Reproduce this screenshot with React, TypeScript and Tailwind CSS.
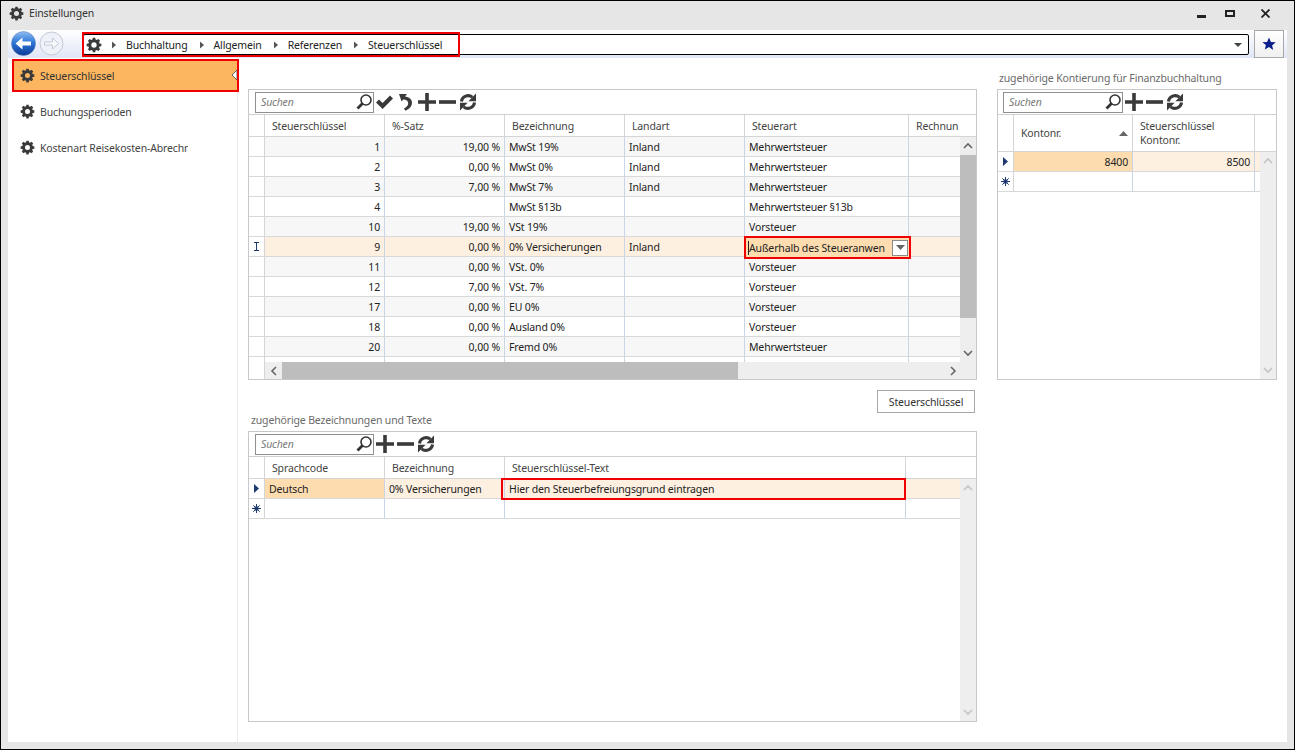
import React from "react";

const GEAR = "M10.2 1h3.6l.5 2.7c.7.2 1.3.5 1.9.8l2.3-1.6 2.6 2.6-1.6 2.3c.3.6.6 1.2.8 1.9l2.7.5v3.6l-2.7.5c-.2.7-.5 1.3-.8 1.9l1.6 2.3-2.6 2.6-2.3-1.6c-.6.3-1.2.6-1.9.8l-.5 2.7h-3.6l-.5-2.7c-.7-.2-1.3-.5-1.9-.8l-2.3 1.6-2.6-2.6 1.6-2.3c-.3-.6-.6-1.2-.8-1.9L1 13.8v-3.6l2.7-.5c.2-.7.5-1.3.8-1.9L2.9 5.5l2.6-2.6 2.3 1.6c.6-.3 1.2-.6 1.9-.8zM12 8a4 4 0 100 8 4 4 0 000-8z";

function Gear({ size = 15 }: { size?: number }) {
  return (
    <svg width={size} height={size} viewBox="0 0 24 24" className="shrink-0">
      <path d={GEAR} fill="#3a3a3a" fillRule="evenodd" />
    </svg>
  );
}

function Tri({ color = "#555", w = 5, h = 9 }: { color?: string; w?: number; h?: number }) {
  return (
    <svg width={w} height={h} viewBox="0 0 5 9" className="shrink-0">
      <path d="M0 0l5 4.5L0 9z" fill={color} />
    </svg>
  );
}

function SearchBox({ width }: { width: number }) {
  return (
    <div
      className="flex h-[21px] items-center justify-between border border-[#8f8f8f] bg-white pl-[5px] pr-0 text-[#7a7a7a] italic"
      style={{ width }}
    >
      <span>Suchen</span>
      <svg width="18" height="18" viewBox="0 0 18 18">
        <circle cx="11" cy="7" r="5" fill="none" stroke="#333" strokeWidth="1.6" />
        <path d="M7.5 10.5L2.5 15.5" stroke="#333" strokeWidth="2.8" />
      </svg>
    </div>
  );
}

function Check() {
  return (
    <svg width="19" height="16" viewBox="0 0 19 16">
      <path d="M1 8.5l3-3 3.6 3.6L15 1.5l3 3L7.6 15z" fill="#3a3a3a" />
    </svg>
  );
}
function Undo() {
  return (
    <svg width="17" height="20" viewBox="0 0 17 20" className="ml-[3px]">
      <path d="M1 2h8l-2 2.4c4 .4 7 2.6 7 6.4 0 3.6-2.8 6.2-6.6 8L6 16.6c2.4-1.4 4.2-3 4.2-5.4 0-2.2-1.8-3.4-5-3.6L3.6 9.6z" fill="#3a3a3a" />
    </svg>
  );
}
function Plus({ className = "" }: { className?: string }) {
  return (
    <svg width="20" height="20" viewBox="0 0 20 20" className={className}>
      <path d="M8.2 1h3.6v7.2H19v3.6h-7.2V19H8.2v-7.2H1V8.2h7.2z" fill="#3a3a3a" />
    </svg>
  );
}
function Minus() {
  return (
    <svg width="19" height="20" viewBox="0 0 19 20">
      <rect x="1" y="8.2" width="17" height="3.6" fill="#3a3a3a" />
    </svg>
  );
}
function Sync() {
  return (
    <svg width="20" height="20" viewBox="0 0 20 20">
      <path d="M3.4 9.5A6.8 6.8 0 0 1 14.4 5.2" fill="none" stroke="#3a3a3a" strokeWidth="3" />
      <path d="M16.6 10.5A6.8 6.8 0 0 1 5.6 14.8" fill="none" stroke="#3a3a3a" strokeWidth="3" />
      <path d="M18 1.6v7.6h-7.6z" fill="#3a3a3a" />
      <path d="M2 18.4v-7.6h7.6z" fill="#3a3a3a" />
    </svg>
  );
}

function Star() {
  return (
    <svg width="14" height="14" viewBox="0 0 14 14">
      <path d="M7 .5l1.9 4.4 4.8.4-3.6 3.1 1.1 4.7L7 10.1l-4.2 2.5 1.1-4.7L.3 5.3l4.8-.4z" fill="#0b1f8c" />
    </svg>
  );
}

function NewRowMark() {
  return (
    <svg width="9" height="9" viewBox="0 0 9 9">
      <path d="M4.5 0v9M0 4.5h9M1.3 1.3l6.4 6.4M7.7 1.3L1.3 7.7" stroke="#1f3a6e" strokeWidth="1" />
      <circle cx="4.5" cy="4.5" r="2.2" fill="#1f3a6e" />
    </svg>
  );
}

function IBeam() {
  return (
    <svg width="5" height="9" viewBox="0 0 5 9">
      <path d="M0 .5h5M0 8.5h5M2.5 .5v8" stroke="#1f3a6e" strokeWidth="1" fill="none" />
    </svg>
  );
}

function Chevron({ dir, color = "#666" }: { dir: "up" | "down" | "left" | "right"; color?: string }) {
  const d = {
    up: "M1 6l4-4 4 4",
    down: "M1 2l4 4 4-4",
    left: "M6 1L2 5l4 4",
    right: "M2 1l4 4-4 4",
  }[dir];
  const box = dir === "up" || dir === "down" ? "0 0 10 8" : "0 0 8 10";
  const w = dir === "up" || dir === "down" ? 10 : 8;
  const h = dir === "up" || dir === "down" ? 8 : 10;
  return (
    <svg width={w} height={h} viewBox={box}>
      <path d={d} fill="none" stroke={color} strokeWidth="1.6" />
    </svg>
  );
}

function HeaderCell({ w, children, noBorder }: { w: number; children?: React.ReactNode; noBorder?: boolean }) {
  return (
    <div
      className={`flex h-full shrink-0 items-center overflow-hidden whitespace-nowrap pl-[7px] text-[#444] ${noBorder ? "" : "border-r border-[#d5d5d5]"}`}
      style={{ width: w }}
    >
      {children}
    </div>
  );
}

type Cell = { t?: string; right?: boolean };

function Row({
  widths,
  cells,
  mark,
  zebra,
  selected,
  firstStrong,
  height = 20,
}: {
  widths: number[];
  cells: Cell[];
  mark?: React.ReactNode;
  zebra?: boolean;
  selected?: boolean;
  firstStrong?: boolean;
  height?: number;
}) {
  return (
    <div
      className={`flex shrink-0 border-b border-[#d8d8d8] ${selected ? "bg-[#fdf0e0]" : zebra ? "bg-[#f7f7f7]" : "bg-white"}`}
      style={{ height }}
    >
      <div className="flex w-[16px] shrink-0 items-center justify-center border-r border-[#d5d5d5] bg-white">{mark}</div>
      {cells.map((c, i) => (
        <div
          key={i}
          className={`flex shrink-0 items-center overflow-hidden whitespace-nowrap text-[#222] ${c.right ? "justify-end pr-[4px]" : "pl-[4px]"} ${
            i < cells.length - 1 ? "border-r border-[#c9d5e6]" : ""
          } ${selected && firstStrong && i === 0 ? "bg-[#fddcb0]" : ""}`}
          style={{ width: widths[i] }}
        >
          {c.t}
        </div>
      ))}
    </div>
  );
}

function VScroll({ thumb, disabled }: { thumb?: [number, number]; disabled?: boolean }) {
  const c = disabled ? "#c4c4c4" : "#666";
  return (
    <div className="relative flex w-[16px] shrink-0 flex-col justify-between bg-[#eeeeee]">
      <div className="flex h-[18px] items-center justify-center">
        <Chevron dir="up" color={c} />
      </div>
      <div className="flex h-[18px] items-center justify-center">
        <Chevron dir="down" color={c} />
      </div>
      {thumb && (
        <div className="absolute left-0 right-0 bg-[#bdbdbd]" style={{ top: thumb[0], height: thumb[1] }} />
      )}
    </div>
  );
}

const WM = [120, 120, 120, 120, 164, 51];
const rowsMain: string[][] = [
  ["1", "19,00 %", "MwSt 19%", "Inland", "Mehrwertsteuer"],
  ["2", "0,00 %", "MwSt 0%", "Inland", "Mehrwertsteuer"],
  ["3", "7,00 %", "MwSt 7%", "Inland", "Mehrwertsteuer"],
  ["4", "", "MwSt §13b", "", "Mehrwertsteuer §13b"],
  ["10", "19,00 %", "VSt 19%", "", "Vorsteuer"],
  ["9", "0,00 %", "0% Versicherungen", "Inland", ""],
  ["11", "0,00 %", "VSt. 0%", "", "Vorsteuer"],
  ["12", "7,00 %", "VSt. 7%", "", "Vorsteuer"],
  ["17", "0,00 %", "EU 0%", "", "Vorsteuer"],
  ["18", "0,00 %", "Ausland 0%", "", "Vorsteuer"],
  ["20", "0,00 %", "Fremd 0%", "", "Mehrwertsteuer"],
];

function toCells(r: string[]): Cell[] {
  return [
    { t: r[0], right: true },
    { t: r[1], right: true },
    { t: r[2] },
    { t: r[3] },
    { t: r[4] },
    {},
  ];
}

function Toolbar({ width, check, small }: { width: number; check?: boolean; small?: boolean }) {
  return (
    <div className={`flex h-[25px] shrink-0 items-center gap-[1px] border-b border-[#d0d0d0] ${small ? "pl-[5px]" : "pl-[6px]"}`}>
      <SearchBox width={width} />
      {check && <Check />}
      {check && <Undo />}
      <Plus className={check ? "ml-[1px]" : ""} />
      <Minus />
      <Sync />
    </div>
  );
}

function MainGrid() {
  return (
    <div className="flex h-[291px] shrink-0 flex-col border border-[#c8c8c8]">
      <Toolbar width={119} check />
      <div className="flex h-[22px] shrink-0 border-b border-[#d5d5d5]">
        <HeaderCell w={16} />
        <HeaderCell w={120}>Steuerschlüssel</HeaderCell>
        <HeaderCell w={120}>%-Satz</HeaderCell>
        <HeaderCell w={120}>Bezeichnung</HeaderCell>
        <HeaderCell w={120}>Landart</HeaderCell>
        <HeaderCell w={164}>Steuerart</HeaderCell>
        <HeaderCell w={51} noBorder>
          Rechnun
        </HeaderCell>
      </div>
      <div className="flex min-h-0 flex-1">
        <div className="flex min-w-0 flex-1 flex-col overflow-hidden">
          {rowsMain.map((r, i) => {
            const selected = i === 5;
            return (
              <div key={i} className={`shrink-0 ${selected ? "relative z-10" : ""}`}>
                <Row
                  widths={WM}
                  cells={toCells(r)}
                  zebra={i % 2 === 0}
                  selected={selected}
                  mark={selected ? <IBeam /> : undefined}
                />
                {selected && (
                  <div className="absolute left-[495px] top-[-1px] flex h-[23px] w-[167px] items-center justify-between border-2 border-[#f00000] bg-[#fddcb0] pl-[2px] pr-[1px]">
                    <span className="whitespace-nowrap border-l border-[#222] text-[#222]">Außerhalb des Steueranwen</span>
                    <span className="flex h-[16px] w-[16px] items-center justify-center border border-[#8a8a8a] bg-white">
                      <svg width="9" height="5" viewBox="0 0 9 5">
                        <path d="M0 0h9L4.5 5z" fill="#666" />
                      </svg>
                    </span>
                  </div>
                )}
              </div>
            );
          })}
          <div className="flex h-[5px] shrink-0">
            <div className="w-[16px] shrink-0 border-r border-[#d5d5d5]" />
            <div className="w-[120px] shrink-0 border-r border-[#c9d5e6]" />
            <div className="w-[120px] shrink-0 border-r border-[#c9d5e6]" />
            <div className="w-[120px] shrink-0 border-r border-[#c9d5e6]" />
            <div className="w-[120px] shrink-0 border-r border-[#c9d5e6]" />
            <div className="w-[164px] shrink-0 border-r border-[#c9d5e6]" />
          </div>
        </div>
        <VScroll thumb={[18, 163]} />
      </div>
      <div className="flex h-[17px] shrink-0">
        <div className="w-[16px] shrink-0 border-r border-[#d5d5d5]" />
        <div className="flex flex-1 items-center bg-[#eeeeee]">
          <div className="flex w-[17px] shrink-0 items-center justify-center">
            <Chevron dir="left" />
          </div>
          <div className="h-full w-[456px] bg-[#bdbdbd]" />
          <div className="flex-1" />
          <div className="flex w-[14px] shrink-0 items-center justify-center">
            <Chevron dir="right" />
          </div>
        </div>
        <div className="w-[16px] shrink-0 bg-[#eeeeee]" />
      </div>
    </div>
  );
}

function TextGrid() {
  const W = [120, 120, 401, 54];
  return (
    <div className="flex h-[291px] shrink-0 flex-col border border-[#c8c8c8]">
      <Toolbar width={119} />
      <div className="flex h-[22px] shrink-0 border-b border-[#d5d5d5]">
        <HeaderCell w={16} />
        <HeaderCell w={120}>Sprachcode</HeaderCell>
        <HeaderCell w={120}>Bezeichnung</HeaderCell>
        <HeaderCell w={401}>Steuerschlüssel-Text</HeaderCell>
      </div>
      <div className="flex min-h-0 flex-1">
        <div className="min-w-0 flex-1">
          <div className="relative">
            <Row
              widths={W}
              selected
              firstStrong
              mark={<Tri color="#1f3a6e" />}
              cells={[{ t: "Deutsch" }, { t: "0% Versicherungen" }, { t: "" }, {}]}
            />
            <div className="absolute left-[252px] top-[-1px] flex h-[22px] w-[405px] items-center border-2 border-[#f00000] pl-[6px] text-[#222]">
              Hier den Steuerbefreiungsgrund eintragen
            </div>
          </div>
          <Row widths={W} mark={<NewRowMark />} cells={[{}, {}, {}, {}]} />
        </div>
        <VScroll disabled />
      </div>
    </div>
  );
}

function AccountGrid() {
  const W = [119, 122, 5];
  return (
    <div className="flex h-[291px] shrink-0 flex-col border border-[#c8c8c8]">
      <Toolbar width={120} small />
      <div className="flex h-[37px] shrink-0 border-b border-[#d5d5d5]">
        <HeaderCell w={16} />
        <div className="flex h-full w-[119px] shrink-0 items-center justify-between border-r border-[#d5d5d5] pl-[7px] pr-[4px] text-[#444]">
          <span>Kontonr.</span>
          <svg width="9" height="5" viewBox="0 0 9 5">
            <path d="M0 5h9L4.5 0z" fill="#666" />
          </svg>
        </div>
        <div className="flex h-full w-[122px] shrink-0 items-center border-r border-[#d5d5d5] pl-[7px] leading-[14px] text-[#444]">
          <span>
            Steuerschlüssel
            <br />
            Kontonr.
          </span>
        </div>
      </div>
      <div className="flex min-h-0 flex-1">
        <div className="min-w-0 flex-1">
          <Row
            widths={W}
            selected
            firstStrong
            mark={<Tri color="#1f3a6e" />}
            cells={[{ t: "8400", right: true }, { t: "8500", right: true }, {}]}
          />
          <Row widths={W} mark={<NewRowMark />} cells={[{}, {}, {}]} />
        </div>
        <VScroll disabled />
      </div>
    </div>
  );
}

function SideItem({ label, active }: { label: string; active?: boolean }) {
  return (
    <div
      className={`relative flex h-[33px] w-[227px] items-center gap-[5px] overflow-hidden pl-[6px] ${
        active ? "border-2 border-[#f00000] bg-[#fcb65f] text-[#333]" : "border-2 border-transparent text-[#444]"
      }`}
    >
      <Gear size={15} />
      <span className="w-[148px] overflow-hidden whitespace-nowrap">{label}</span>
      {active && (
        <svg width="6" height="10" viewBox="0 0 6 10" className="absolute right-0 top-[9px]">
          <path d="M6 0L1 5l5 5z" fill="#fff" stroke="#444" strokeWidth="0.8" />
        </svg>
      )}
    </div>
  );
}

function NavCircle({ disabled }: { disabled?: boolean }) {
  return disabled ? (
    <svg width="25" height="25" viewBox="0 0 25 25">
      <circle cx="12.5" cy="12.5" r="11.5" fill="#eef1f7" stroke="#c3c9d6" />
      <path d="M5.5 11h8V7l6 5.5-6 5.5v-4h-8z" fill="#f8f9fb" stroke="#c3c9d6" />
    </svg>
  ) : (
    <svg width="25" height="25" viewBox="0 0 25 25">
      <defs>
        <linearGradient id="bk" x1="0" y1="0" x2="0" y2="1">
          <stop offset="0" stopColor="#8fbdf2" />
          <stop offset="0.45" stopColor="#2f78d8" />
          <stop offset="1" stopColor="#0b3a96" />
        </linearGradient>
      </defs>
      <circle cx="12.5" cy="12.5" r="12" fill="url(#bk)" stroke="#5d7fb8" strokeWidth="0.5" />
      <path d="M20 10.5h-8.5V6.5L4.5 12.5l7 6v-4H20z" fill="#fff" />
    </svg>
  );
}

function Crumb({ label, first }: { label: string; first?: boolean }) {
  return (
    <>
      <span className={first ? "ml-[10px]" : "ml-[12px]"}>
        <Tri w={4} h={8} />
      </span>
      <span className="ml-[10px] text-[#222]">{label}</span>
    </>
  );
}

export default function App() {
  return (
    <div
      className="flex h-[750px] w-[1295px] flex-col border border-black bg-[#e6e6e6] text-[10.5px] leading-[14px] tracking-[-0.15px]"
      style={{ fontFamily: '"Noto Sans", "Open Sans", sans-serif' }}
    >
      <div className="flex h-[29px] shrink-0 items-center pb-[5px] pl-[8px] text-[#333]">
        <Gear size={15} />
        <span className="ml-[5px] flex-1">Einstellungen</span>
        <div className="h-[3px] w-[9px] translate-y-[3px] bg-[#222]" />
        <div className="ml-[19px] mr-[26px] h-[7px] w-[10px] border-2 border-[#222]" />
        <svg width="9" height="9" viewBox="0 0 9 9" className="mr-[24px]">
          <path d="M.5.5l8 8M8.5.5l-8 8" stroke="#222" strokeWidth="1.8" />
        </svg>
      </div>

      <div className="ml-[7px] mr-[7px] flex min-h-0 flex-1 flex-col bg-white">
        <div className="flex h-[28px] shrink-0 bg-gradient-to-b from-white to-[#dfe6f6] pl-[3px]">
          <div className="flex items-center gap-[3px] pb-[1px]">
            <NavCircle />
            <NavCircle disabled />
          </div>
          <div className="relative ml-[19px] mt-[4px] flex h-[21px] w-[1166px] shrink-0 items-center justify-between rounded-[2px] border border-black bg-white pr-[6px]">
            <div className="absolute left-[-2px] top-[-3px] flex h-[25px] w-[378px] items-center border-2 border-[#f00000] pl-[2px]">
              <Gear size={16} />
              <Crumb label="Buchhaltung" first />
              <Crumb label="Allgemein" />
              <Crumb label="Referenzen" />
              <Crumb label="Steuerschlüssel" />
            </div>
            <span />
            <svg width="8" height="4" viewBox="0 0 8 4">
              <path d="M0 0h8L4 4z" fill="#444" />
            </svg>
          </div>
          <div className="ml-[5px] flex h-[28px] w-[30px] shrink-0 items-center justify-center border border-[#a8a8a8] bg-gradient-to-b from-white to-[#f0f0f0]">
            <Star />
          </div>
        </div>

        <div className="flex min-h-0 flex-1">
          <div className="flex w-[230px] shrink-0 flex-col gap-[3px] border-r border-[#ececec] pl-[4px] pt-[1px]">
            <SideItem label="Steuerschlüssel" active />
            <SideItem label="Buchungsperioden" />
            <SideItem label="Kostenart Reisekosten-Abrechnung" />
          </div>

          <div className="flex min-w-0 flex-1 gap-[20px] pl-[10px]">
            <div className="flex w-[729px] shrink-0 flex-col pt-[31px]">
              <MainGrid />
              <div className="mt-[10px] flex justify-end pr-[2px]">
                <div className="flex h-[23px] w-[98px] items-center justify-center border border-[#a8a8a8] text-[#333]">
                  Steuerschlüssel
                </div>
              </div>
              <div className="pl-[3px] text-[#6b6b6b]">zugehörige Bezeichnungen und Texte</div>
              <div className="mt-[4px]">
                <TextGrid />
              </div>
            </div>
            <div className="flex w-[280px] shrink-0 flex-col pt-[13px]">
              <div className="mb-[4px] pl-[2px] text-[#6b6b6b]">zugehörige Kontierung für Finanzbuchhaltung</div>
              <AccountGrid />
            </div>
          </div>
        </div>
      </div>
      <div className="h-[7px] shrink-0" />
    </div>
  );
}
